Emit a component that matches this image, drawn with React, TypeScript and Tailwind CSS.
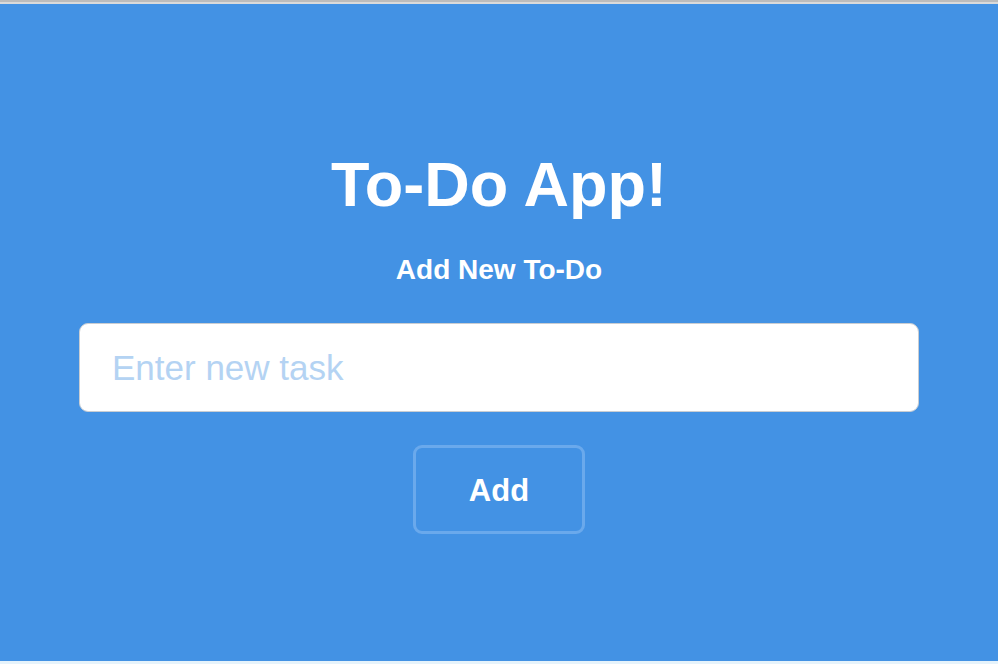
import { useState } from "react";

export default function App() {
    const [task, setTask] = useState("");

    return (
        <div className="flex h-[664px] flex-col bg-[#4392e4] font-['Liberation_Sans',Arial,sans-serif]">
            {/* barre du haut */}
            <div className="h-[2px] bg-[#bcbcbc]" />
            <div className="h-[2px] bg-[#dadada]" />

            <main className="flex flex-1 flex-col items-center pt-[149px]">
                <h1 className="text-[63px] leading-[62px] font-bold text-white">To-Do App!</h1>
                <h2 className="mt-[41px] text-[28px] leading-[27px] font-bold text-white">Add New To-Do</h2>

                <input
                    value={task}
                    onChange={(e) => setTask(e.target.value)}
                    placeholder="Enter new task"
                    className="mt-[40px] h-[89px] w-[840px] rounded-[9px] border border-[#c9cdd2] bg-white px-[32px] text-[35px] text-gray-800 outline-none placeholder:text-[#b4d3f3]"
                />

                <button className="mt-[33px] h-[89px] w-[172px] rounded-[9px] border-[3px] border-[#6aa9ec] pt-[3px] text-[31px] font-bold text-white">
                    Add
                </button>
            </main>

            <div className="h-[3px] bg-[#e6f3fb]" />
        </div>
    );
}
